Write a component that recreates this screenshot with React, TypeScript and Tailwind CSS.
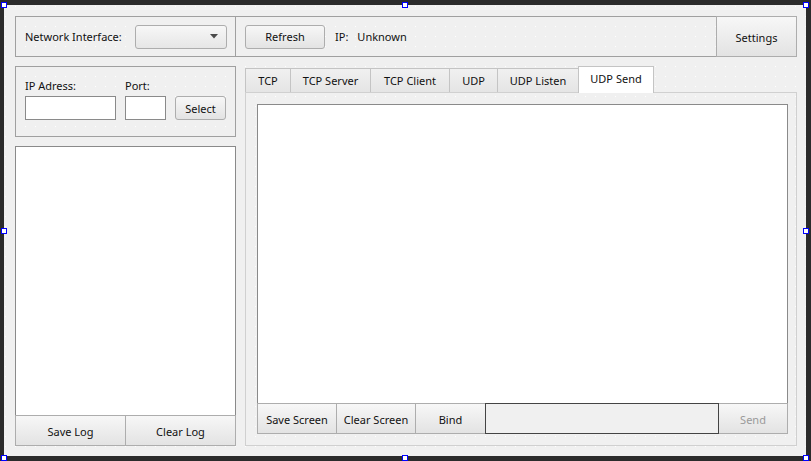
import React from "react";

const btn =
  "border border-[#adadad] bg-linear-to-b from-[#f7f7f7] to-[#e3e3e3] flex items-center justify-center pt-[2px]";

const Handle: React.FC<{ className: string }> = ({ className }) => (
  <div className={`absolute w-[6px] h-[6px] border border-[#0000ff] bg-white ${className}`} />
);

const tabs = [
  { name: "TCP", w: "w-[45px]" },
  { name: "TCP Server", w: "w-[80px]" },
  { name: "TCP Client", w: "w-[79px]" },
  { name: "UDP", w: "w-[48px]" },
  { name: "UDP Listen", w: "w-[81px]" },
];

const App: React.FC = () => {
  return (
    <div className="relative w-[811px] h-[461px] bg-[#2b2b2b] pt-[5px] pb-[5px] pl-[4px] pr-[5px] font-['Noto_Sans',sans-serif] text-[11px] text-[#111]">
      <div className="w-[802px] h-full bg-[#f0f0f0] bg-[radial-gradient(circle_at_1.5px_1.5px,#ffffff_0.9px,transparent_1px)] bg-size-[10px_10px] pt-[11px] pl-[11px] pr-[9px] pb-[10px] flex flex-col gap-[9px]">
        {/* top bar */}
        <div className="h-[41px] flex border border-[#a0a0a0]">
          <div className="w-[220px] border-r border-[#a0a0a0] flex items-center justify-between pl-[9px] pr-[8px]">
            <span className="pt-[2px]">Network Interface:</span>
            <div className="w-[92px] h-[24px] rounded-[3px] border border-[#adadad] bg-linear-to-b from-[#f7f7f7] to-[#e6e6e6] flex items-center justify-end pr-[8px]">
              <svg width="8" height="5" viewBox="0 0 8 5">
                <path d="M0 0h8L4 4.5z" fill="#4a4a4a" />
              </svg>
            </div>
          </div>
          <div className="flex-1 flex items-center">
            <button className={`${btn} ml-[9px] w-[80px] h-[24px] rounded-[3px]`}>Refresh</button>
            <span className="ml-[10px] pt-[2px]">IP:</span>
            <span className="ml-[9px] pt-[2px]">Unknown</span>
            <button className={`${btn} ml-auto -my-px -mr-px w-[81px] h-[41px] pt-[3px]`}>Settings</button>
          </div>
        </div>

        <div className="flex-1 flex gap-[9px]">
          {/* left column */}
          <div className="w-[221px] flex flex-col gap-[9px]">
            <div className="h-[71px] border border-[#a0a0a0] pl-[9px] pt-[11px]">
              <div className="flex gap-[9px]">
                <div className="w-[91px] flex flex-col">
                  <span className="h-[16px] leading-[16px] mb-[2px]">IP Adress:</span>
                  <div className="h-[24px] border border-[#8a8a8a] bg-white" />
                </div>
                <div className="w-[41px] flex flex-col">
                  <span className="h-[16px] leading-[16px] mb-[2px]">Port:</span>
                  <div className="h-[24px] border border-[#8a8a8a] bg-white" />
                </div>
                <div className="w-[51px] flex flex-col justify-end">
                  <button className={`${btn} h-[24px] rounded-[3px]`}>Select</button>
                </div>
              </div>
            </div>
            <div className="flex-1 flex flex-col">
              <div className="flex-1 border border-[#8a8a8a] bg-white" />
              <div className="flex h-[31px] -mt-px">
                <button className={`${btn} w-[111px] border-[#999] pt-[3px]`}>Save Log</button>
                <button className={`${btn} w-[111px] -ml-px border-[#999] pt-[3px]`}>Clear Log</button>
              </div>
            </div>
          </div>

          {/* tab widget */}
          <div className="flex-1 flex flex-col">
            <div className="flex items-end h-[26px]">
              {tabs.map((t) => (
                <div
                  key={t.name}
                  className={`${t.w} h-[24px] border-l border-t border-[#c4c4c4] bg-linear-to-b from-[#f0f0f0] to-[#e5e5e5] flex items-center justify-center pt-[2px]`}
                >
                  {t.name}
                </div>
              ))}
              <div className="relative z-10 w-[76px] h-[27px] -mb-px border-l border-r border-t border-[#c4c4c4] bg-white flex items-center justify-center pb-[2px]">
                UDP Send
              </div>
            </div>
            <div className="flex-1 border border-[#d0d0d0] pt-[11px] pl-[11px] pr-[8px] pb-[11px] flex flex-col">
              <div className="flex-1 border border-[#8a8a8a] bg-white" />
              <div className="flex h-[31px] -mt-px">
                <button className={`${btn} w-[80px] pt-[4px]`}>Save Screen</button>
                <button className={`${btn} w-[80px] -ml-px pt-[4px]`}>Clear Screen</button>
                <button className={`${btn} w-[71px] -ml-px pt-[4px]`}>Bind</button>
                <div className="relative z-10 w-[234px] -ml-px border border-[#444] bg-[#f0f0f0]" />
                <button className={`${btn} w-[70px] -ml-px text-[#9a9a9a] pt-[4px]`}>Send</button>
              </div>
            </div>
          </div>
        </div>
      </div>

      <Handle className="left-[1px] top-[2px]" />
      <Handle className="left-[402px] top-[2px]" />
      <Handle className="left-[803px] top-[2px]" />
      <Handle className="left-[1px] top-[228px]" />
      <Handle className="left-[803px] top-[228px]" />
      <Handle className="left-[1px] top-[455px]" />
      <Handle className="left-[402px] top-[455px]" />
      <Handle className="left-[803px] top-[455px]" />
    </div>
  );
};

export default App;
